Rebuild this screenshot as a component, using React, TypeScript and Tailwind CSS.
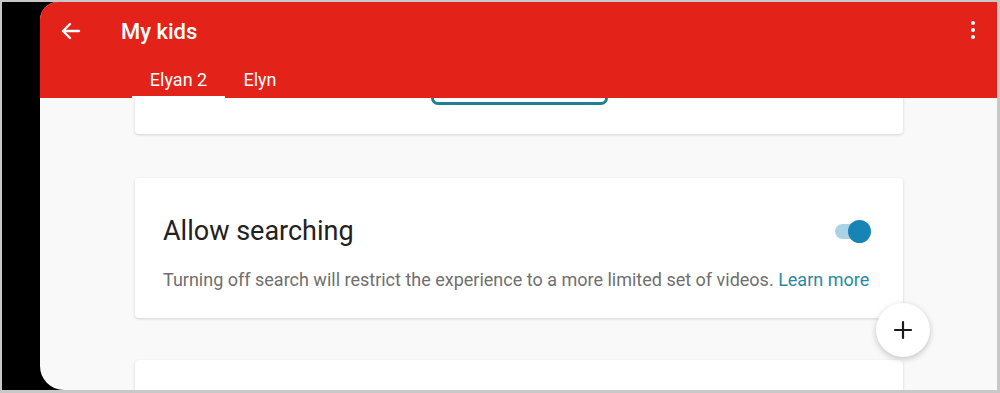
import React from "react";

export default function App() {
  return (
    <div className="w-[1000px] h-[393px] bg-[#c8c8c8] pt-[2px] pl-[2px] pr-[3px] pb-[3px] overflow-hidden" style={{ fontFamily: "Roboto, 'Noto Sans', sans-serif" }}>
      <div className="w-full h-full bg-black flex">
        <div className="w-[38px] shrink-0" />
        <div className="relative flex-1 h-full flex flex-col bg-[#f9f9f9] rounded-tl-[18px] rounded-bl-[24px] overflow-hidden">
          {/* Header */}
          <div className="relative z-10 h-[96px] shrink-0 bg-[#e3221a] flex flex-col">
            <div className="h-[56px] pt-[2px] flex items-center">
              <div className="w-[22px] ml-[20px] flex items-center justify-center">
                <svg width="20" height="18" viewBox="0 0 20 18" fill="none" stroke="white" strokeWidth="2.4" strokeLinecap="round" strokeLinejoin="round">
                  <path d="M18 9H3" />
                  <path d="M9 2L2 9l7 7" />
                </svg>
              </div>
              <div className="ml-[39px] text-white text-[22px] font-medium">My kids</div>
              <div className="flex-1" />
              <div className="mr-[22px] -mt-[2px] flex flex-col items-center gap-[2.5px]">
                <div className="w-[4.5px] h-[4.5px] rounded-full bg-white" />
                <div className="w-[4.5px] h-[4.5px] rounded-full bg-white" />
                <div className="w-[4.5px] h-[4.5px] rounded-full bg-white" />
              </div>
            </div>
            <div className="flex-1 flex pl-[92px]">
              <div className="relative w-[93px] flex items-center justify-center text-white text-[18px] pt-[2px]">
                Elyan 2
                <div className="absolute left-0 right-0 bottom-0 h-[2px] bg-white" />
              </div>
              <div className="w-[70px] flex items-center justify-center text-white text-[18px] pt-[2px]">Elyn</div>
            </div>
          </div>

          {/* Content */}
          <div className="flex-1 overflow-hidden px-[95px] pr-[94px]">
            <div className="-mt-[60px] h-[96px] bg-white rounded-[4px] shadow-[0_1px_3px_rgba(0,0,0,0.16)] flex items-end justify-center pb-[29px]">
              <div className="w-[177px] h-[48px] border-[3px] border-[#207f90] rounded-[7px]" />
            </div>

            <div className="mt-[44px] h-[140px] bg-white rounded-[4px] shadow-[0_1px_3px_rgba(0,0,0,0.16)] pl-[28px] pr-[32px] flex flex-col">
              <div className="mt-[36px] flex items-center justify-between h-[34px]">
                <div className="text-[27px] text-[#212121] leading-none">Allow searching</div>
                <div className="relative w-[36px] h-[24px] flex items-center">
                  <div className="absolute left-0 w-[28px] h-[15px] rounded-full bg-[#a9d3e5]" />
                  <div className="absolute right-0 w-[23px] h-[23px] rounded-full bg-[#1884b6]" />
                </div>
              </div>
              <div className="mt-[23px] text-[18px] text-[#6f6f6f] leading-none whitespace-nowrap">
                Turning off search will restrict the experience to a more limited set of videos.{" "}
                <span className="text-[#2a89a3]">Learn more</span>
              </div>
            </div>

            <div className="mt-[42px] h-[140px] bg-white rounded-[4px] shadow-[0_1px_3px_rgba(0,0,0,0.16)]" />
          </div>

          {/* FAB */}
          <div className="absolute left-[836px] top-[301px] w-[54px] h-[54px] rounded-full bg-white shadow-[0_2px_6px_rgba(0,0,0,0.22)] flex items-center justify-center z-20">
            <svg width="20" height="20" viewBox="0 0 20 20" stroke="#1a1a1a" strokeWidth="2.2" strokeLinecap="round">
              <path d="M10 2v16M2 10h16" />
            </svg>
          </div>
        </div>
      </div>
    </div>
  );
}
